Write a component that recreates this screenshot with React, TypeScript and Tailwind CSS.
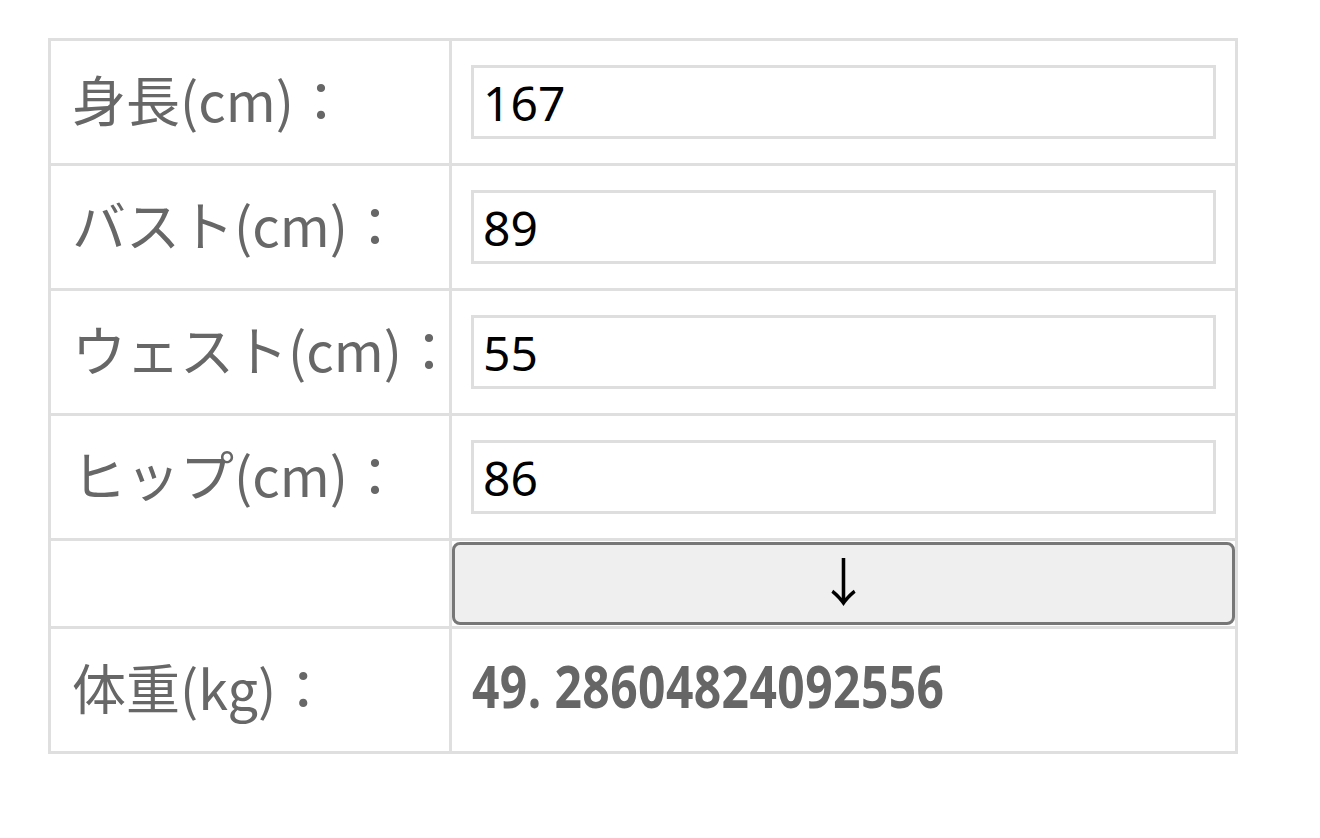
import React from 'react';

const rows = [
  { label: '身長(cm)：', value: '167' },
  { label: 'バスト(cm)：', value: '89' },
  { label: 'ウェスト(cm)：', value: '55' },
  { label: 'ヒップ(cm)：', value: '86' },
];

export default function App() {
  return (
    <div className="min-h-[838px] bg-white pl-[48px] pt-[38px]">
      <div className="w-[1190px] border-[3px] border-[#dfdfdf]">
        {rows.map((row) => (
          <div key={row.label} className="flex border-b-[3px] border-[#dfdfdf]">
            <div className="w-[401px] border-r-[3px] border-[#dfdfdf] pl-[21px] pb-[6px] flex items-center text-[54px] text-[#676767] leading-none whitespace-nowrap [font-family:'Noto_Sans_CJK_JP',sans-serif]">
              {row.label}
            </div>
            <div className="flex-1 px-[19px] py-[24px]">
              <input
                readOnly
                value={row.value}
                className="block w-full h-[74px] border-[3px] border-[#dedede] pl-[9px] text-[48px] text-black outline-none [font-family:'Noto_Sans',sans-serif]"
              />
            </div>
          </div>
        ))}
        <div className="flex border-b-[3px] border-[#dfdfdf]">
          <div className="w-[401px] border-r-[3px] border-[#dfdfdf]" />
          <div className="flex-1 h-[85px] py-[1px]">
            <button className="w-full h-full rounded-[8px] border-[3px] border-[#777777] bg-[#efefef] pb-[8px] text-[52px] leading-none text-black [font-family:'Noto_Sans_CJK_JP',sans-serif]">
              ↓
            </button>
          </div>
        </div>
        <div className="flex h-[122px]">
          <div className="w-[401px] border-r-[3px] border-[#dfdfdf] pl-[21px] pb-[6px] flex items-center text-[54px] text-[#676767] leading-none whitespace-nowrap [font-family:'Noto_Sans_CJK_JP',sans-serif]">
            体重(kg)：
          </div>
          <div className="flex-1 pl-[20px] pb-[10px] flex items-center">
            <span className="inline-block origin-left scale-x-[0.8] text-[60px] font-bold text-[#666666] leading-none whitespace-nowrap tracking-[0.5px] [font-family:'Noto_Sans',sans-serif]">
              49. 28604824092556
            </span>
          </div>
        </div>
      </div>
    </div>
  );
}
